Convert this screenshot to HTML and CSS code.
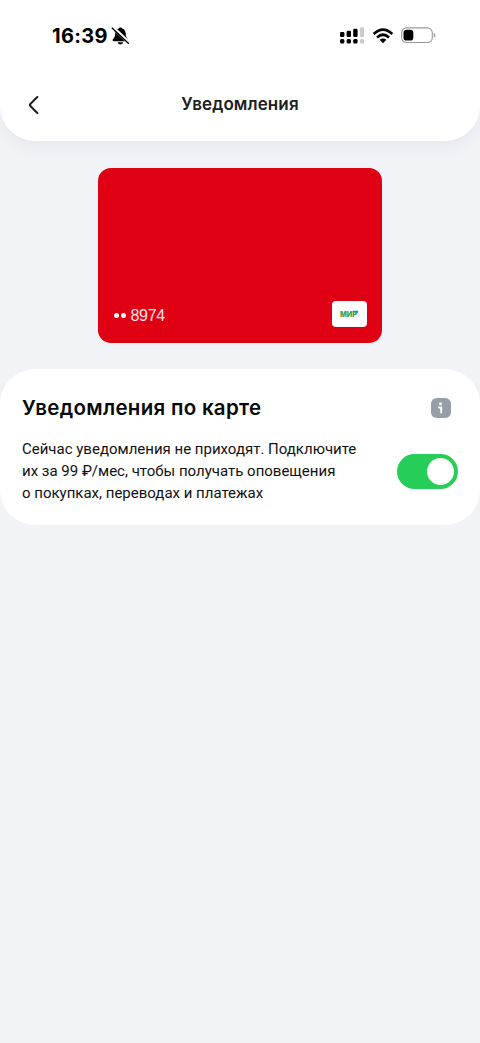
FILE: index.html
```html
<!DOCTYPE html>
<html lang="ru">
<head>
<meta charset="utf-8">
<title>Уведомления</title>
<link rel="stylesheet" href="styles.css">
</head>
<body>
<header class="header">
  <div class="status">
    <div class="clock"><span class="time">16:39</span>
      <svg class="bell" width="19" height="18" viewBox="0 0 19 18"><path d="M1.600 13.200c0-1.300 2.500-2 2.500-6.200C4.100 3.800 5.800 1.700 7.700 1.400 8.100.2 10.700.2 11.100 1.400c2 .4 3.500 2.400 3.600 5.400.1 4.300 2.500 5.100 2.500 6.400 0 .6-.4 1.100-1 1.100H2.600c-.6 0-1-.5-1-1.100zM6.600 15.200h5.600c-.3 1.400-1.400 2.200-2.800 2.200S6.800 16.600 6.600 15.200z"/><path d="M1.600 0.300L18.300 16" stroke="#fff" stroke-width="3.600"/><path d="M1.300 1.200L17.300 16.200" stroke="#000" stroke-width="1.500" stroke-linecap="round"/></svg>
    </div>
    <div class="indicators">
      <svg width="25" height="18" viewBox="0 0 25 18"><g><rect x="0" y="5" width="4.400" height="5" rx="1.300"/><rect x="6.600" y="3.800" width="4.400" height="6.200" rx="1.300"/><rect x="13.200" y="1.700" width="4.400" height="8.300" rx="1.300"/><rect x="0" y="12" width="4.400" height="4.600" rx="1.500"/><rect x="6.600" y="12" width="4.400" height="4.600" rx="1.500"/><rect x="13.200" y="12" width="4.400" height="4.600" rx="1.500"/></g><g fill="#ccc"><rect x="19.900" y="0.200" width="4.200" height="9.800" rx="1.300"/><rect x="19.900" y="12" width="4.200" height="4.600" rx="1.500"/></g></svg>
      <svg class="wifi" width="22" height="16" viewBox="0 0 22 16"><g fill="none" stroke="#000" stroke-width="2.700"><path d="M1.700 5.900Q11-2.600 20.300 5.900"/><path d="M5 9.400Q11 4.100 17 9.400"/></g><path d="M7.600 11.800Q11 9.100 14.400 11.800L11 15.200z"/></svg>
      <svg class="battery" width="35" height="17" viewBox="0 0 35 17"><rect x="0.700" y="0.900" width="30.600" height="14.600" rx="4.800" fill="none" stroke="#999" stroke-width="1.100"/><rect x="2.500" y="2.800" width="9.800" height="10.800" rx="3.200"/><path d="M32.800 5.900c2.100.7 2.100 4 0 4.700z" fill="#999"/></svg>
    </div>
  </div>
  <div class="navbar">
    <svg class="back" width="12" height="20" viewBox="0 0 12 20"><path d="M9.300 2.100L2.600 8.700Q1.300 10 2.600 11.300L9.300 17.900" fill="none" stroke="#1d2023" stroke-width="2.100" stroke-linecap="round"/></svg>
    <h1 class="title">Уведомления</h1>
  </div>
</header>
<main>
  <section class="card">
    <div class="number"><i class="dot"></i><i class="dot"></i><span class="digits">8974</span></div>
    <div class="mir"><svg width="19" height="9" viewBox="0 0 19 9"><text class="mir-text" x="0" y="6.500" textLength="17" lengthAdjust="spacingAndGlyphs">МИР</text><path d="M12.600 .7h5.700c.1 2-1.200 3.100-2.600 3.100l.3-1.400h-3z" fill="#218fc2"/></svg></div>
  </section>
  <section class="panel">
    <div class="heading">
      <h2 class="subtitle">Уведомления по карте</h2>
      <svg class="info" width="20" height="20" viewBox="0 0 20 20"><rect width="20" height="20" rx="5.600" fill="#969fa8"/><circle cx="9.500" cy="5.700" r="1.500" fill="#fff"/><path d="M8 9.400h2.200v5.200" fill="none" stroke="#fff" stroke-width="2" stroke-linecap="round" stroke-linejoin="round"/></svg>
    </div>
    <div class="setting">
      <p class="description">Сейчас уведомления не приходят. Подключите<br>их за 99 ₽/мес, чтобы получать оповещения<br>о покупках, переводах и платежах</p>
      <div class="toggle" role="switch" aria-checked="true"><span class="knob"></span></div>
    </div>
  </section>
</main>
</body>
</html>
```
FILE: styles.css
```css
* { box-sizing: border-box; }
body { margin: 0; min-height: 1043px; background: #f2f3f7; color: #1d2023; font-family: Inter, sans-serif; }
svg { display: block; flex: none; }
.header { height: 141px; background: #fff; border-radius: 0 0 35px 35px; box-shadow: 0 5px 17px rgba(40, 45, 60, .06); }
.status { height: 70px; padding: 1px 44px 0 52px; display: flex; justify-content: space-between; align-items: center; }
.clock { display: flex; align-items: center; color: #000; }
.time { width: 59px; padding-top: 1px; font-size: 20px; font-weight: 750; letter-spacing: .3px; }
.bell { margin-top: 1px; }
.indicators { display: flex; align-items: center; }
.wifi { margin-left: 7px; }
.battery { margin-left: 7px; }
.navbar { height: 70px; padding: 0 28px; display: grid; grid-template-columns: 12px 1fr 12px; align-items: center; }
.title { margin: 0; padding-bottom: 2px; text-align: center; font-size: 17px; line-height: 24px; font-weight: 600; letter-spacing: .1px; }
.card { width: 284px; height: 175px; margin: 27px auto 0; padding: 0 15px 16px 16px; border-radius: 13px; background: #e00014; display: flex; justify-content: space-between; align-items: flex-end; }
.number { height: 24px; display: flex; align-items: center; color: #fde5e7; }
.dot { width: 5px; height: 5px; margin-right: 1.500px; border-radius: 50%; background: #fff; }
.digits { margin-left: 3.500px; padding-top: 1px; font-family: "Liberation Sans", sans-serif; font-size: 16px; line-height: 24px; letter-spacing: -.3px; }
.mir { width: 35px; height: 26px; border-radius: 4px; background: #fff; display: flex; align-items: center; justify-content: center; }
.mir-text { font: 800 8px Inter, sans-serif; fill: #35a047; }
.panel { height: 156px; margin-top: 26px; padding: 24px 22px 0; border-radius: 35px; background: #fff; }
.heading { height: 30px; display: flex; align-items: center; justify-content: space-between; }
.subtitle { margin: 0; font-size: 20.500px; line-height: 30px; font-weight: 600; letter-spacing: .3px; color: #080909; }
.info { margin-right: 7px; }
.setting { margin-top: 15px; display: flex; align-items: center; justify-content: space-between; }
.description { margin: 0; font-family: Roboto, sans-serif; font-size: 15px; line-height: 22px; white-space: nowrap; color: #111; }
.toggle { width: 61px; height: 35px; padding: 4px; border-radius: 18px; background: #26cd58; display: flex; justify-content: flex-end; align-items: center; }
.knob { width: 27px; height: 27px; border-radius: 50%; background: #fff; }
```
